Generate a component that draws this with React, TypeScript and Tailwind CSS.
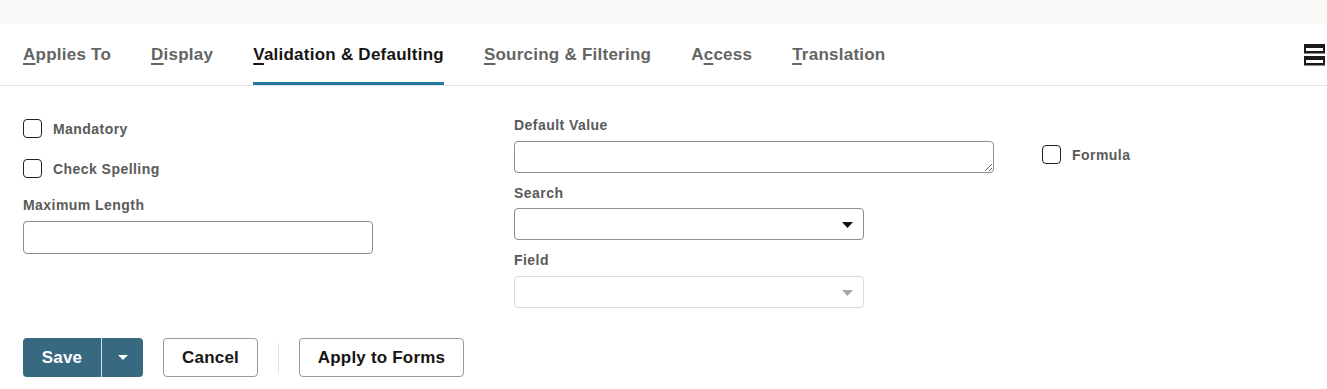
import React from "react";

const font = { fontFamily: '"Liberation Sans", Arial, sans-serif' };

function Tab({ pre, u, post, active }: { pre?: string; u: string; post: string; active?: boolean }) {
  return (
    <div className="relative h-full flex items-center">
      <span
        className={
          "text-[17px] font-bold leading-5 tracking-[0.24px] " +
          (active ? "text-[#161513]" : "text-[#646464]")
        }
      >
        {pre}
        <span className="underline decoration-[2px] underline-offset-[3px]">{u}</span>
        {post}
      </span>
      {active && <div className="absolute left-0 right-0 bottom-0 h-[3px] bg-[#1f7a9c]" />}
    </div>
  );
}

function Checkbox({ label }: { label: string }) {
  return (
    <div className="flex items-center h-[19px]">
      <div className="w-[19px] h-[19px] rounded-[4px] border border-[#222] bg-white box-border" />
      <span className="ml-[11px] text-[14px] font-bold text-[#5a5a5a] leading-4 tracking-[0.45px]">{label}</span>
    </div>
  );
}

function Label({ children }: { children: React.ReactNode }) {
  return <div className="text-[14px] font-bold text-[#5a5a5a] leading-4 h-4 tracking-[0.45px]">{children}</div>;
}

function Select({ disabled }: { disabled?: boolean }) {
  return (
    <div
      className={
        "w-[350px] h-[32px] rounded-[4px] border bg-white flex items-center justify-end pr-[10px] box-border " +
        (disabled ? "border-[#dcdcdc]" : "border-[#8c8c8c]")
      }
    >
      <svg width="11" height="6" viewBox="0 0 11 6" className="mt-[1px]">
        <path d="M0 0 H11 L5.5 6 Z" fill={disabled ? "#a8a8a8" : "#111"} />
      </svg>
    </div>
  );
}

export default function App() {
  return (
    <div className="w-[1327px] h-[389px] bg-white overflow-hidden" style={font}>
      <div className="h-[24px] bg-[#f9f8f6]" />
      <div className="h-[62px] border-b border-[#e3e3e3] flex items-stretch pl-[23px] pr-[2px] box-border">
        <div className="flex gap-[40px] h-full">
          <Tab u="A" post="pplies To" />
          <Tab u="D" post="isplay" />
          <Tab u="V" post="alidation & Defaulting" active />
          <Tab u="S" post="ourcing & Filtering" />
          <Tab pre="A" u="c" post="cess" />
          <Tab u="T" post="ranslation" />
        </div>
        <div className="ml-auto flex items-center">
          <svg width="21" height="22" viewBox="0 0 21 22">
            <rect x="0" y="0" width="21" height="9.5" fill="#1b1b1b" />
            <rect x="2" y="4" width="17" height="3" fill="#fff" />
            <rect x="0" y="12" width="21" height="9.5" fill="#1b1b1b" />
            <rect x="2" y="16" width="17" height="3" fill="#fff" />
          </svg>
        </div>
      </div>

      <div className="flex pl-[23px]">
        <div className="w-[491px] pt-[33px] flex flex-col">
          <Checkbox label="Mandatory" />
          <div className="mt-[21px]">
            <Checkbox label="Check Spelling" />
          </div>
          <div className="mt-[19px]">
            <Label>Maximum Length</Label>
          </div>
          <div className="mt-[8px] w-[350px] h-[33px] rounded-[4px] border border-[#8c8c8c] box-border" />
        </div>

        <div className="w-[528px] pt-[31px] flex flex-col">
          <Label>Default Value</Label>
          <textarea
            className="mt-[8px] w-[480px] h-[32px] rounded-[4px] border border-[#8c8c8c] box-border resize-y outline-none block"
            readOnly
          />
          <div className="mt-[12px]">
            <Label>Search</Label>
          </div>
          <div className="mt-[7px]">
            <Select />
          </div>
          <div className="mt-[12px]">
            <Label>Field</Label>
          </div>
          <div className="mt-[8px]">
            <Select disabled />
          </div>
        </div>

        <div className="pt-[59px]">
          <Checkbox label="Formula" />
        </div>
      </div>

      <div className="flex items-center pl-[23px] mt-[30px] gap-[20px]">
        <div className="flex h-[39px] rounded-[4px] overflow-hidden bg-[#376a80]">
          <div className="w-[78px] flex items-center justify-center text-white text-[17px] font-bold tracking-[0.2px]">Save</div>
          <div className="w-px bg-[#d6e0e4]" />
          <div className="w-[41px] flex items-center justify-center">
            <svg width="10" height="5" viewBox="0 0 10 5">
              <path d="M0 0 H10 L5 5 Z" fill="#fff" />
            </svg>
          </div>
        </div>
        <div className="w-[95px] h-[39px] rounded-[4px] border border-[#9a9a9a] box-border flex items-center justify-center text-[17px] font-bold text-[#161513] tracking-[0.2px]">
          Cancel
        </div>
        <div className="w-px h-[30px] bg-[#e0e0e0]" />
        <div className="w-[165px] h-[39px] rounded-[4px] border border-[#9a9a9a] box-border flex items-center justify-center text-[17px] font-bold text-[#161513] tracking-[0.2px]">
          Apply to Forms
        </div>
      </div>
    </div>
  );
}
